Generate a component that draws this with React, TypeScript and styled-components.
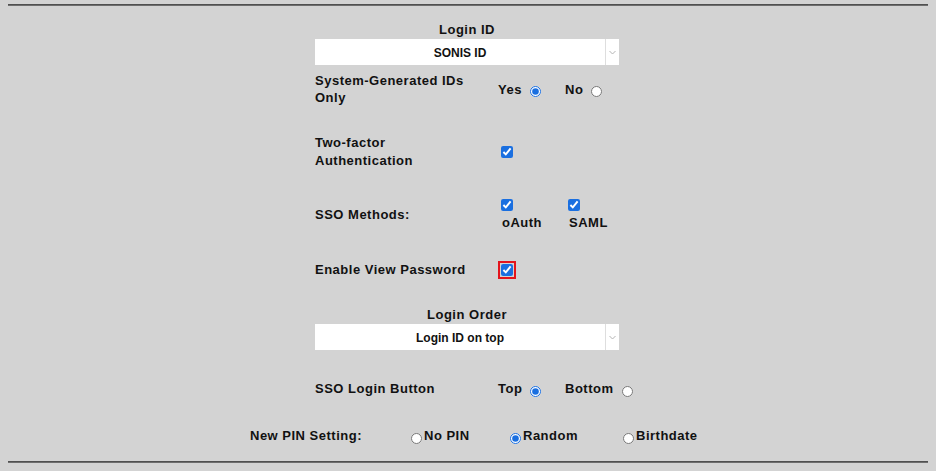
import React from 'react'
import styled, { createGlobalStyle } from 'styled-components'

const GlobalStyle = createGlobalStyle`
  html, body {
    margin: 0;
    padding: 0;
    background: #d3d3d3;
  }
  body {
    font-family: "Liberation Sans", Arial, sans-serif;
    font-weight: 700;
    font-size: 13px;
    color: #111;
    letter-spacing: 0.5px;
  }
`

const Page = styled.div`
  padding: 0 8px;
  width: 920px;
  height: 471px;
  overflow: hidden;
`

const Rule = styled.div<{ $top: number }>`
  height: 2px;
  margin-top: ${p => p.$top}px;
  border-top: 1px solid #505050;
  border-bottom: 1px solid #6e6e6e;
  box-sizing: border-box;
`

const Form = styled.div`
  display: flex;
  flex-direction: column;
  align-items: center;
`

const Column = styled.div`
  width: 304px;
  margin-right: 2px;
  display: flex;
  flex-direction: column;
`

const Title = styled.div<{ $top: number }>`
  margin-top: ${p => p.$top}px;
  line-height: 16px;
  text-align: center;
`

const Select = styled.div`
  margin-top: 1px;
  height: 26px;
  background: #fff;
  display: flex;
  align-items: stretch;
  font-size: 12px;
  letter-spacing: 0;
`

const SelectValue = styled.div`
  flex: 1;
  display: flex;
  align-items: center;
  justify-content: center;
  padding-top: 1px;
`

const SelectArrow = styled.div`
  width: 13px;
  border-left: 1px solid #dedede;
  display: flex;
  align-items: center;
  justify-content: center;
`

const Row = styled.div<{ $top: number; $lh?: number }>`
  margin-top: ${p => p.$top}px;
  display: grid;
  grid-template-columns: 183px 1fr;
  align-items: center;
  line-height: ${p => p.$lh ?? 16}px;
`

const Label = styled.div``

const Options = styled.div`
  display: flex;
  align-items: center;
`

const Option = styled.label<{ $w?: number }>`
  width: ${p => (p.$w ? `${p.$w}px` : 'auto')};
  display: inline-flex;
  align-items: center;
  white-space: nowrap;
`

const Radio = styled.input.attrs({ type: 'radio' })<{ $before?: boolean }>`
  width: 11px;
  height: 11px;
  margin: ${p => (p.$before ? '4px 2px 0 3px' : '4px 0 0 8px')};
  accent-color: #1a6fe0;
`

const Check = styled.input.attrs({ type: 'checkbox' })<{ $flag?: boolean }>`
  width: 12px;
  height: 12px;
  margin: 0 0 0 3px;
  accent-color: #1a6fe0;
  outline: ${p => (p.$flag ? '2px solid #e3141c' : 'none')};
  outline-offset: 1px;
`

const Method = styled.label`
  width: 67px;
  display: flex;
  flex-direction: column;
  align-items: flex-start;
`

const MethodName = styled.span`
  padding-left: 4px;
  margin-top: 4px;
`

const PinRow = styled.div`
  margin-top: 31px;
  width: 436px;
  display: grid;
  grid-template-columns: 158px 99px 113px 66px;
  align-items: center;
  line-height: 16px;
`

const Chevron = () => (
  <svg width="7" height="5" viewBox="0 0 7 5">
    <path d="M0.5 1 L3.5 4 L6.5 1" fill="none" stroke="#b4b4b4" strokeWidth="1" />
  </svg>
)

export default function App() {
  return (
    <>
      <GlobalStyle />
      <Page>
        <Rule $top={4} />
        <Form>
          <Column>
            <Title $top={16}>Login ID</Title>
            <Select>
              <SelectValue>SONIS ID</SelectValue>
              <SelectArrow><Chevron /></SelectArrow>
            </Select>

            <Row $top={7} $lh={17}>
              <Label>System-Generated IDs<br />Only</Label>
              <Options>
                <Option $w={67}>Yes<Radio name="sysid" defaultChecked /></Option>
                <Option>No<Radio name="sysid" /></Option>
              </Options>
            </Row>

            <Row $top={28} $lh={18}>
              <Label>Two-factor<br />Authentication</Label>
              <Options><Check defaultChecked /></Options>
            </Row>

            <Row $top={29}>
              <Label>SSO Methods:</Label>
              <Options>
                <Method><Check defaultChecked /><MethodName>oAuth</MethodName></Method>
                <Method><Check defaultChecked /><MethodName>SAML</MethodName></Method>
              </Options>
            </Row>

            <Row $top={31}>
              <Label>Enable View Password</Label>
              <Options><Check defaultChecked $flag /></Options>
            </Row>

            <Title $top={29}>Login Order</Title>
            <Select>
              <SelectValue>Login ID on top</SelectValue>
              <SelectArrow><Chevron /></SelectArrow>
            </Select>

            <Row $top={31}>
              <Label>SSO Login Button</Label>
              <Options>
                <Option $w={67}>Top<Radio name="ssobtn" defaultChecked /></Option>
                <Option>Bottom<Radio name="ssobtn" /></Option>
              </Options>
            </Row>
          </Column>

          <PinRow>
            <Label>New PIN Setting:</Label>
            <Option><Radio name="pin" $before />No PIN</Option>
            <Option><Radio name="pin" $before defaultChecked />Random</Option>
            <Option><Radio name="pin" $before />Birthdate</Option>
          </PinRow>
        </Form>
        <Rule $top={17} />
      </Page>
    </>
  )
}
